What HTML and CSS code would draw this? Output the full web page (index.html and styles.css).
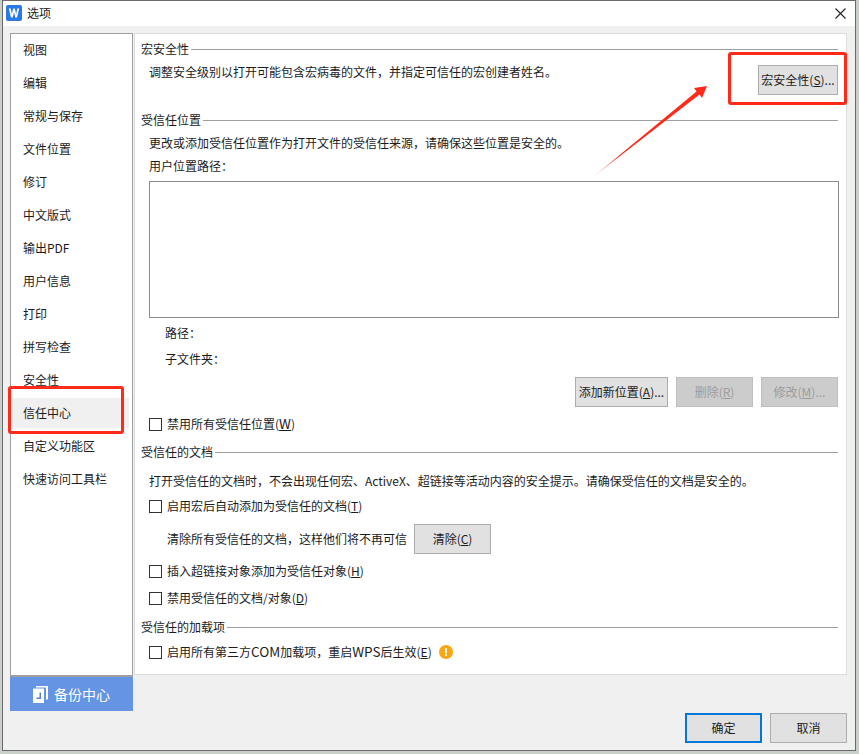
FILE: index.html
```html
<!DOCTYPE html>
<html lang="zh-CN">
<head>
<meta charset="utf-8">
<title>选项</title>
<link rel="stylesheet" href="styles.css">
</head>
<body>
<div class="window">
  <header class="titlebar">
    <svg class="app-icon" width="16" height="16" viewBox="0 0 16 16"><rect width="16" height="16" rx="2" fill="#2b78e8"/><path d="M2.800 3.500h2l1 5.800L7.200 3.500h1.600l1.400 5.800 1-5.800h2L11 12.500H9.300L8 7.200 6.700 12.500H5z" fill="#fff"/></svg>
    <span class="title-text">选项</span>
    <svg class="close-icon" width="11" height="11" viewBox="0 0 11 11"><path d="M.5.5l10 10M10.500.5l-10 10" stroke="#222" stroke-width="1.100" fill="none"/></svg>
  </header>
  <div class="content">
    <aside class="side">
      <nav class="side-list">
        <div class="side-item">视图</div>
        <div class="side-item">编辑</div>
        <div class="side-item">常规与保存</div>
        <div class="side-item">文件位置</div>
        <div class="side-item">修订</div>
        <div class="side-item">中文版式</div>
        <div class="side-item">输出PDF</div>
        <div class="side-item">用户信息</div>
        <div class="side-item">打印</div>
        <div class="side-item">拼写检查</div>
        <div class="side-item">安全性</div>
        <div class="side-item active">信任中心</div>
        <div class="side-item">自定义功能区</div>
        <div class="side-item">快速访问工具栏</div>
      </nav>
      <div class="backup">
        <svg width="15" height="17" viewBox="0 0 15 17"><path d="M3 0h12v13.500h-2V1.500H3z" fill="#fff"/><path d="M0 2.500h11V17H0z" fill="#fff"/><path d="M6.500 6.500H8v6.500H3.500v-1.500h3z" fill="#5a7fc4"/></svg>
        <span>备份中心</span>
      </div>
    </aside>
    <main class="main">
      <section class="panel">
        <h2 class="group">宏安全性</h2>
        <div class="macro-row">
          <p class="line indent">调整安全级别以打开可能包含宏病毒的文件，并指定可信任的宏创建者姓名。</p>
          <button class="btn macro-btn">宏安全性(<u>S</u>)...</button>
        </div>
        <h2 class="group loc">受信任位置</h2>
        <p class="line indent gap3">更改或添加受信任位置作为打开文件的受信任来源，请确保这些位置是安全的。</p>
        <p class="line indent gap3">用户位置路径：</p>
        <div class="listbox"></div>
        <p class="line sub path">路径：</p>
        <p class="line sub folder">子文件夹：</p>
        <div class="loc-btns">
          <button class="btn add-btn">添加新位置(<u>A</u>)...</button>
          <button class="btn small-btn" disabled>删除(<u>R</u>)</button>
          <button class="btn small-btn" disabled>修改(<u>M</u>)...</button>
        </div>
        <label class="check m7"><span class="box"></span><span>禁用所有受信任位置(<u class="wide">W</u>)</span></label>
        <h2 class="group doc">受信任的文档</h2>
        <p class="line indent doc-desc">打开受信任的文档时，不会出现任何宏、ActiveX、超链接等活动内容的安全提示。请确保受信任的文档是安全的。</p>
        <label class="check m5"><span class="box"></span><span>启用宏后自动添加为受信任的文档(<u>T</u>)</span></label>
        <div class="clear-row">
          <span>清除所有受信任的文档，这样他们将不再可信</span>
          <button class="btn small-btn">清除(<u>C</u>)</button>
        </div>
        <label class="check m7"><span class="box"></span><span>插入超链接对象添加为受信任对象(<u>H</u>)</span></label>
        <label class="check m7"><span class="box"></span><span>禁用受信任的文档/对象(<u>D</u>)</span></label>
        <h2 class="group addin">受信任的加载项</h2>
        <div class="addin-row">
          <label class="check"><span class="box"></span><span>启用所有第三方<span class="wide">COM</span>加载项，重启<span class="wide">WPS</span>后生效(<u>E</u>)</span></label>
          <svg width="14" height="14" viewBox="0 0 14 14"><circle cx="7" cy="7" r="7" fill="#f9a60f"/><rect x="6" y="3" width="2" height="5.500" rx=".8" fill="#fff"/><circle cx="7" cy="10.200" r="1.100" fill="#fff"/></svg>
        </div>
      </section>
      <footer class="footer">
        <button class="btn foot-btn primary">确定</button>
        <button class="btn foot-btn">取消</button>
      </footer>
    </main>
  </div>
</div>
<div class="mark mark-side"></div>
<div class="mark mark-btn"></div>
<svg class="arrow" width="859" height="754" viewBox="0 0 859 754">
  <defs><linearGradient id="fade" gradientUnits="userSpaceOnUse" x1="593" y1="177" x2="700" y2="90"><stop offset="0" stop-color="#ff2a1a" stop-opacity=".3"/><stop offset=".25" stop-color="#ff2a1a"/></linearGradient></defs>
  <polygon points="593,177 696.500,91.500 694,88 707,86 702,98 699.500,94.500" fill="url(#fade)"/>
</svg>
</body>
</html>
```
FILE: styles.css
```css
* { box-sizing: border-box; }
html, body { margin: 0; height: 100%; }
body {
  background: #c9d0c9;
  font: 12px/20px "Noto Sans CJK SC", "Liberation Sans", sans-serif;
  color: #1c1c1c;
  overflow: hidden;
  position: relative;
}
.window {
  width: 854px;
  height: 751px;
  margin-left: 2px;
  background: #f0f0f0;
  border: 1px solid #6a6a6a;
  display: flex;
  flex-direction: column;
}
.titlebar {
  height: 25px;
  flex: none;
  background: #fff;
  display: flex;
  align-items: center;
  padding: 0 9px 2px 3px;
}
.app-icon { flex: none; }
.title-text { margin-left: 5px; }
.close-icon { margin-left: auto; margin-top: 1px; }
.content {
  display: flex;
  gap: 1px;
  padding: 7px 8px 0 7px;
  flex: 1;
}
.side { width: 123px; flex: none; display: flex; flex-direction: column; }
.side-list {
  height: 644px;
  background: #fff;
  border: 1px solid #a0a0a0;
  border-bottom-width: 2px;
  padding: 1px 3px 0 1px;
}
.side-item {
  height: 30px;
  line-height: 30px;
  margin-bottom: 3px;
  padding-left: 11px;
}
.side-item.active { background: #f0f0f0; }
.backup {
  height: 34px;
  background: #6494e3;
  color: #fff;
  font-size: 14px;
  display: flex;
  align-items: center;
  padding-left: 23px;
  gap: 6px;
}
.main { flex: 1; min-width: 0; display: flex; flex-direction: column; }
.panel {
  height: 642px;
  background: #fff;
  border: 1px solid #dcdcdc;
  padding: 5px 8px 0 6px;
}
.group {
  margin: 0;
  font: inherit;
  display: flex;
  align-items: center;
  gap: 2px;
}
.group::after { content: ""; flex: 1; border-top: 1px solid #a0a0a0; }
.line { margin: 0; }
.indent { padding-left: 8px; }
.gap3 { margin-top: 3px; }
.macro-row { display: flex; justify-content: space-between; align-items: flex-start; margin-top: 3px; }
.btn {
  font: inherit;
  color: #1c1c1c;
  background: #e1e1e1;
  border: 1px solid #adadad;
  height: 30px;
  padding: 0;
  white-space: nowrap;
}
.btn[disabled] { background: #cccccc; border-color: #bfbfbf; color: #9c9c9c; }
.macro-btn { width: 80px; margin-top: 3px; }
.loc { margin-top: 15px; }
.listbox {
  margin: 5px -1px 0 8px;
  height: 137px;
  border: 1px solid #8c8c8c;
  background: #fff;
}
.sub { padding-left: 24px; }
.path { margin-top: 5px; }
.folder { margin-top: 6px; }
.loc-btns { display: flex; justify-content: flex-end; gap: 8px; margin-top: 8px; }
.add-btn { width: 93px; }
.small-btn { width: 77px; }
.check { display: flex; align-items: center; padding-left: 8px; }
.box { width: 13px; height: 13px; border: 1px solid #333; background: #fff; margin-right: 5px; flex: none; }
.wide { font-size: 13.500px; line-height: 1; }
.m7 { margin-top: 7px; }
.m5 { margin-top: 5px; }
.doc { margin-top: 8px; }
.doc-desc { margin-top: 9px; }
.clear-row { display: flex; align-items: center; gap: 7px; padding-left: 26px; margin-top: 8px; }
.addin { margin-top: 9px; }
.addin-row { display: flex; align-items: center; gap: 7px; margin-top: 5px; }
.footer { display: flex; justify-content: flex-end; gap: 8px; margin-top: 38px; }
.foot-btn { width: 77px; }
.primary { border: 2px solid #0078d7; }
.mark {
  position: absolute;
  border: 3px solid #ff2a1a;
  border-radius: 3px;
}
.mark-side { left: 8px; top: 386px; width: 116px; height: 48px; }
.mark-btn { left: 728px; top: 52px; width: 119px; height: 53px; }
.arrow { position: absolute; left: 0; top: 0; pointer-events: none; }
```
